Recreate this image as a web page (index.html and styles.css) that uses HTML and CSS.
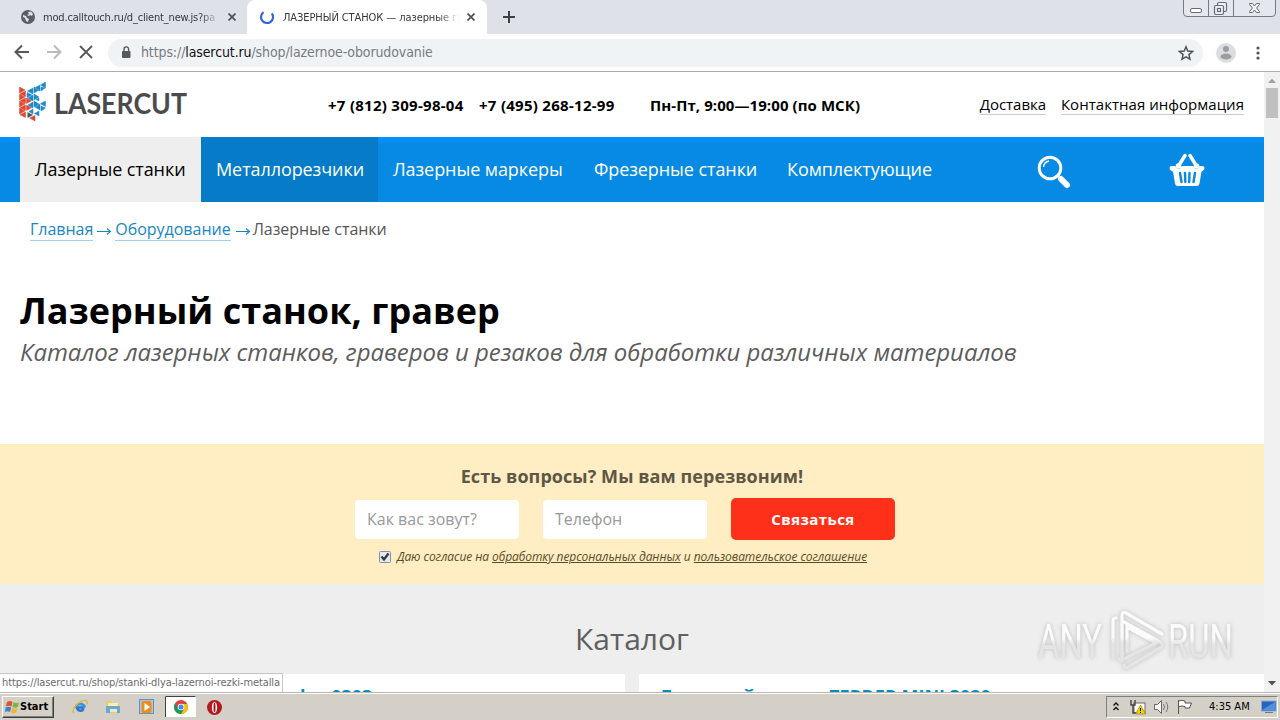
FILE: index.html
```html
<!DOCTYPE html>
<html lang="ru">
<head>
<meta charset="utf-8">
<title>ЛАЗЕРНЫЙ СТАНОК — лазерные граверы</title>
<link rel="stylesheet" href="styles.css">
</head>
<body>
<div class="desktop">
  <div class="tabs">
    <div class="tab tab-idle">
      <svg class="fav" width="14" height="14" viewBox="0 0 14 14"><circle cx="7" cy="7" r="7" fill="#5a5d63"/><path d="M2 5l3 1 1 2 2 1-1 3-2-1-1-3-2-1zM7 2l3-.5L12 4l-1 2-2-1-1 1-2-1 2-1z" fill="#dee1e6"/></svg>
      <span class="tab-text t1">mod.calltouch.ru/d_client_new.js?pa</span>
      <svg width="8" height="8" viewBox="0 0 8 8"><path d="M.5.5l7 7M7.5.5l-7 7" stroke="#4d5056" stroke-width="1.7"/></svg>
    </div>
    <div class="tab tab-active">
      <svg class="fav" width="14" height="14" viewBox="0 0 14 14"><path d="M8.500 1.200A6 6 0 1 0 12.900 8.300" transform="rotate(-50 7 7)" fill="none" stroke="#3367d6" stroke-width="2.200"/></svg>
      <span class="tab-text t2">ЛАЗЕРНЫЙ СТАНОК — лазерные гр</span>
      <svg width="8" height="8" viewBox="0 0 8 8"><path d="M.5.5l7 7M7.5.5l-7 7" stroke="#4d5056" stroke-width="1.7"/></svg>
    </div>
    <svg class="plus" width="12" height="12" viewBox="0 0 12 12"><path d="M6 0v12M0 6h12" stroke="#3c4043" stroke-width="2"/></svg>
    <svg class="winbtns" width="94" height="18" viewBox="0 0 94 18"><path d="M.5 0v13q0 3.500 3.500 3.500h85q3.500 0 3.500-3.500V0M25.500 0v16.500M50.500 0v16.500" fill="#e4e7ee" stroke="#757a86"/><rect x="7.500" y="8.500" width="11" height="4" rx="1.500" fill="#fff" stroke="#666b77"/><g fill="#eef0f4" stroke="#666b77" stroke-width="1.200"><rect x="34.500" y="2.500" width="9" height="9" rx="1.500"/><rect x="31.500" y="5.500" width="9" height="9" rx="1.500"/><rect x="34.500" y="8.500" width="3" height="3"/></g><path d="M66.500 3.500h3l2 2.500 2-2.500h3v1l-3 3.500 3 3.500v1h-3l-2-2.500-2 2.500h-3v-1l3-3.500-3-3.500z" fill="#f6f7fa" stroke="#666b77"/></svg>
  </div>
  <div class="toolbar">
    <svg width="94" height="38" viewBox="0 0 94 38"><path d="M29 18H16M22 11.500L15.500 18l6.500 6.500" fill="none" stroke="#55585d" stroke-width="2"/><path d="M47 18h13M54 11.500l6.500 6.500-6.500 6.500" fill="none" stroke="#b9bbbe" stroke-width="2"/><path d="M80 12l12 12M92 12L80 24" stroke="#55585d" stroke-width="1.800"/></svg>
    <div class="omnibox">
      <svg width="10" height="13" viewBox="0 0 10 13"><rect x="1" y="5" width="8.500" height="7" rx="1" fill="#55585d"/><path d="M3 5V3.200a2.300 2.300 0 0 1 4.600 0V5" fill="none" stroke="#55585d" stroke-width="1.400"/></svg>
      <span class="url"><span>https://</span><b>lasercut.ru</b><span>/shop/lazernoe-oborudovanie</span></span>
      <svg width="16" height="16" viewBox="0 0 16 16"><path d="M8 1.800l1.800 4.300 4.700.4-3.600 3.100 1.100 4.600L8 11.800l-4 2.400 1.100-4.600L1.500 6.500l4.700-.4z" fill="none" stroke="#50555b" stroke-width="1.500"/></svg>
    </div>
    <svg class="profile" width="20" height="20" viewBox="0 0 20 20"><circle cx="10" cy="10" r="10" fill="#dcdddf"/><circle cx="10" cy="6" r="3" fill="#9b9da0"/><ellipse cx="10" cy="13.500" rx="5.500" ry="3" fill="#9b9da0"/></svg>
    <svg class="dots" width="4" height="14" viewBox="0 0 4 14"><g fill="#50545a"><circle cx="2" cy="2" r="1.600"/><circle cx="2" cy="7" r="1.600"/><circle cx="2" cy="12" r="1.600"/></g></svg>
  </div>
  <div class="viewport">
    <main class="page">
      <header class="head">
        <div class="brand">
          <svg class="mark" width="28" height="40" viewBox="0 0 28 40">
            <g fill="#dc4a34" stroke="#dc4a34" stroke-width=".5"><path d="M0.500 5v6l5.500-3zM0.500 12v6l5.500-3zM0.500 19v6l5.500-3zM0.500 26v6l5.500-3zM6.500 9v5.500L1 11.700zM6.500 16v5.500L1 18.700zM6.500 23v5.500L1 25.700zM6.500 30v5.500L1 32.700zM7.500 16v5.500l5-2.800zM7.500 23v5.500l5-2.800zM16 33.500v5.500l-5.500-3z"/></g>
            <g fill="#1e88c9" stroke="#1e88c9" stroke-width=".5"><path d="M14 6v6L8.500 9zM15 5v6l5-3zM21 3v6l-5.500-3zM26.500 0v6L21.500 3zM22 5v4l4-3zM8 10.500v5l5-2.500zM14 13v6L9 16zM15 12v6l5-3zM14 20v6l-5-3zM15 19v6l5-3zM21 22v6l-5-3zM20 16v3l-3-1.500zM26.500 19v5.500l-5-2.800zM22 24v5l4.500-3zM14 27v5l-4-2.500zM20 29v5l-4.500-2.500z"/></g>
            <path d="M8.500 30v6l5.500-3z" fill="#4c5860"/>
          </svg>
          <svg class="wordmark" width="136" height="36" viewBox="0 0 136 36"><text x="0" y="28" textLength="133" lengthAdjust="spacingAndGlyphs">LASERCUT</text></svg>
        </div>
        <b class="ph1">+7 (812) 309-98-04</b><b class="ph2">+7 (495) 268-12-99</b><b class="hours">Пн-Пт, 9:00—19:00 (по МСК)</b>
        <a class="hl hl1">Доставка</a><a class="hl hl2">Контактная информация</a>
      </header>
      <nav class="nav">
        <a class="n1">Лазерные станки</a><a class="n2">Металлорезчики</a><a class="n3">Лазерные маркеры</a><a class="n4">Фрезерные станки</a><a class="n5">Комплектующие</a>
        <svg class="search" width="34" height="34" viewBox="0 0 34 34"><circle cx="13" cy="13" r="10.800" fill="none" stroke="#fff" stroke-width="3"/><path d="M6.500 12a7 7 0 0 1 5.500-6" fill="none" stroke="#fff" stroke-width="1.500"/><path d="M20.500 20.500l3 3" stroke="#fff" stroke-width="2"/><path d="M24 24l6 6" stroke="#fff" stroke-width="6" stroke-linecap="round"/></svg>
        <svg class="basket" width="36" height="34" viewBox="0 0 36 34"><path d="M2.500 13h31q2 0 2 2t-2 3l-1 .5-2 12q-.5 2.500-2.500 2.500H8.500Q6.500 33 6 30.500l-2-12-1.500-.5Q.5 17 .5 15t2-2z" fill="#fff"/><path d="M11 20l1.500 9M16 20l.3 9M20.500 20l-.3 9M26 20l-1.500 9" stroke="#078ae3" stroke-width="2.400" stroke-linecap="round"/><path d="M16 2.500L9.500 13M21 2.500L27.500 13" stroke="#078ae3" stroke-width="5.500" stroke-linecap="round"/><path d="M16 2.500L9.500 13M21 2.500L27.500 13" stroke="#fff" stroke-width="3.500" stroke-linecap="round"/><circle cx="9.500" cy="13" r="2.800" fill="#fff"/><circle cx="27.500" cy="13" r="2.800" fill="#fff"/></svg>
      </nav>
      <div class="crumbs"><a class="c1">Главная</a><svg class="arrow" width="22" height="10" viewBox="0 0 22 10"><path d="M4 5.500h13M14 2.500l3.500 3-3.500 3" fill="none" stroke="#1687c1" stroke-width="1.100"/></svg><a class="c2">Оборудование</a><svg class="arrow" width="22" height="10" viewBox="0 0 22 10"><path d="M5 5.500h13M15 2.500l3.500 3-3.500 3" fill="none" stroke="#1687c1" stroke-width="1.100"/></svg><span class="c3">Лазерные станки</span></div>
      <h1><span>Лазерный станок, гравер</span></h1>
      <p class="lead"><span>Каталог лазерных станков, граверов и резаков для обработки различных материалов</span></p>
      <section class="ask">
        <h2><span>Есть вопросы? Мы вам перезвоним!</span></h2>
        <div class="form"><div class="field"><span class="f1">Как вас зовут?</span></div><div class="field"><span class="f2">Телефон</span></div><div class="send"><span>Связаться</span></div></div>
        <div class="agree"><svg width="12" height="12" viewBox="0 0 12 12"><rect x=".5" y=".5" width="11" height="11" rx="1" fill="#e4e8f2" stroke="#8b8e96"/><path d="M2.500 5.500L5 8.500 9.500 2.500" fill="none" stroke="#2d3748" stroke-width="2.300"/></svg><span class="agree-text">Даю согласие на <u>обработку персональных данных</u> и <u>пользовательское соглашение</u></span></div>
      </section>
      <section class="catalog">
        <h3><span>Каталог</span></h3>
        <div class="cards"><div class="card card-a"><span>lex 0303</span></div><div class="card card-b"><span>Лазерный станок ZERDER MINI 3020</span></div></div>
      </section>
    </main>
    <div class="scroll"><svg width="16" height="14" viewBox="0 0 16 14"><path d="M4 11h8L8 6.500z" fill="#a0a0a0"/></svg><div class="thumb"></div><svg class="down" width="16" height="14" viewBox="0 0 16 14"><path d="M4 3h8L8 7.500z" fill="#505050"/></svg></div>
    <div class="status"><span>https://lasercut.ru/shop/stanki-dlya-lazernoi-rezki-metalla</span></div>
    <svg class="mark-run" width="200" height="66" viewBox="0 0 200 66">
      <defs><linearGradient id="g" x1="0" y1="0" x2="0" y2="1"><stop offset=".45" stop-color="#fbfbfb"/><stop offset=".55" stop-color="#e5e5e5"/></linearGradient></defs>
      <g class="glow"><text x="2" y="51" textLength="64" lengthAdjust="spacingAndGlyphs">ANY</text><text x="132" y="51" textLength="65" lengthAdjust="spacingAndGlyphs">RUN</text>
      <path d="M77 51V14q0-3 3-3M86 54V9q0-5 4-3l36 21M88 15l36 20q5 3 0 6L92 60q-4 2-4-2M83 52q2 2 5 0l32-16L91 20v24" fill="none" stroke="url(#g)" stroke-width="3.200" stroke-linecap="round"/></g>
    </svg>
  </div>
  <footer class="taskbar">
    <div class="start"><svg width="15" height="14" viewBox="0 0 15 14"><path d="M2 2q3-2 5.500 0L6.500 6.500Q4 5 .8 6.500z" fill="#e4502e"/><path d="M8.300 2.300q3 1.500 5.700 0L12.800 7q-2.500 1.300-5.300 0z" fill="#7cb83d"/><path d="M.6 7.500Q3.500 6 6.200 7.600L5 12Q2.500 10.500 0 12z" fill="#3f7fd0"/><path d="M7.200 8q2.500 1.500 5.300 0l-1.200 4.500q-2.500 1.300-5.200 0z" fill="#f2b52c"/></svg><b>Start</b></div>
    <svg class="quick" width="154" height="24" viewBox="0 0 154 24">
      <g transform="translate(1 4)"><path d="M12.500 8.500H5a3.500 3.500 0 0 0 6.500 1.500" fill="none" stroke="#2476cf" stroke-width="2.500"/><path d="M3.500 9a4.800 4.800 0 0 1 9.400-.5" fill="none" stroke="#3193e5" stroke-width="2.500"/><path d="M2 14Q-1 11 5 5.500T15 2q1 1-.5 3.500" fill="none" stroke="#e3b338" stroke-width="1.300"/></g>
      <g transform="translate(34 4)"><path d="M1 2h5l1 2h7v10H1z" fill="#eacb65"/><path d="M3 4h10v7H3z" fill="#f9efb8"/><path d="M1 7h14v7h-3v-4H5v4H1z" fill="#6ba9cb"/><path d="M5 10h7v3H5z" fill="#e8e8d8"/></g>
      <g transform="translate(68 4)"><rect x=".5" y=".5" width="14" height="14" fill="#a6c8e4" stroke="#5f91c2"/><rect x="2.500" y="2" width="10" height="12" rx="2" fill="#f28a16"/><path d="M5.500 4v8l5.500-4z" fill="#fff"/></g>
      <path d="M94 1h31v21H94z" fill="#fff"/><path d="M94.500 22V1.500h30" fill="none" stroke="#404040"/>
      <g transform="translate(110 12)"><circle r="7" fill="#db4437"/><path d="M-6 -3.500A7 7 0 0 0 0 7L3 1.800H-3z" fill="#0f9d58"/><path d="M0 7A7 7 0 0 0 6.300-3H0L3 2z" fill="#f4c20d"/><circle r="3.300" fill="#fff"/><circle r="2.500" fill="#4285f4"/></g>
      <g transform="translate(143.500 12.500)"><circle r="7.500" fill="#b51820"/><ellipse rx="2.600" ry="5.600" fill="#fff"/><ellipse rx="1" ry="4.800" fill="#a71218"/></g>
    </svg>
    <div class="tray"><svg width="86" height="20" viewBox="0 0 86 20"><path d="M6.500 8.500L9 6l2.500 2.500M6.500 13L9 10.500l2.500 2.500" fill="none" stroke="#111" stroke-width="1.400"/><g><rect x="27" y="6" width="11" height="10" fill="#fff" stroke="#666"/><path d="M24 3v5h4V3M26 8v8h4" fill="none" stroke="#444" stroke-width="1.400"/><path d="M33.500 8l5 9h-10z" fill="#f5d400" stroke="#9b7b00" stroke-width=".7"/><path d="M33.500 11v3M33.500 15v1" stroke="#000"/></g><path d="M47.500 7.500h3l4-4v13l-4-4h-3z" fill="#f7f7f7" stroke="#666"/><path d="M56.500 7q2 3 0 6M59 5q3.500 5 0 10" fill="none" stroke="#777"/><path d="M71.500 3v14M72 4q3-1.500 6 0v2h6.500l-2 5H78V9.500q-3-1-6 0" fill="#fff" stroke="#555"/></svg><span class="clock">4:35 AM</span><svg class="screen" width="16" height="14" viewBox="0 0 16 14"><rect x=".5" y="1" width="14.500" height="10" fill="#2864bd" stroke="#8ba9cf"/><path d="M1 10L14 2v8z" fill="#4f91df"/><path d="M4 12.500h8" stroke="#777"/></svg></div>
  </footer>
</div>
</body>
</html>
```
FILE: styles.css
```css
*{box-sizing:border-box}
body{margin:0;font-family:"Open Sans","Noto Sans",sans-serif;color:#000}
svg{display:block;flex:none}
.desktop{width:1280px;height:720px;overflow:hidden;display:flex;flex-direction:column;background:#fff}
span,b,a{white-space:nowrap}
.tabs{height:34px;background:#dee1e8;display:flex;align-items:center;flex:none;position:relative;font:11px "DejaVu Sans Condensed","DejaVu Sans",sans-serif}
.tab{height:34px;display:flex;align-items:center}
.tab-idle{width:247px;padding-left:21px}
.tab-active{width:240px;background:#fff;border-radius:8px 8px 0 0;padding-left:13px}
.tab-text{overflow:hidden;color:#34373b;-webkit-mask-image:linear-gradient(90deg,#000 88%,transparent)}
.t1{width:177px;margin:0 8px;letter-spacing:-.18px}
.t2{width:176px;margin:0 8px 0 9px;letter-spacing:-.08px}
.plus{margin-left:16px}
.winbtns{position:absolute;right:3px;top:0}
.toolbar{height:38px;flex:none;display:flex;align-items:center;border-bottom:1px solid #adadad}
.omnibox{width:1095px;height:28px;border-radius:14px;background:#f0f3f6;margin-left:14px;display:flex;align-items:center;padding:0 9px 0 13px}
.url{flex:1;margin:-2px 0 0 10px;font:14px "DejaVu Sans Condensed","DejaVu Sans",sans-serif;letter-spacing:-.11px;color:#777b80}
.url b{font-weight:400;color:#111}
.profile{margin-left:13px}
.dots{margin-left:20px}
.viewport{height:620px;flex:none;display:flex;position:relative;overflow:hidden}
.page{width:1264px;height:620px;overflow:hidden}
.head{height:65px;display:flex;align-items:center;font-size:15px;padding:1px 20px 0 19px}
.brand{display:flex;align-items:center;width:309px;margin-top:-7px}
.wordmark{margin:4px 0 0 7px}
.wordmark text{font:700 28px Lato,sans-serif;fill:#4b4b4d}
.ph1{width:151px;letter-spacing:.28px}
.ph2{width:171px;letter-spacing:.28px}
.hours{flex:1;letter-spacing:.08px}
.hl{border-bottom:1px solid #ccc;line-height:19px}
.hl1{margin-right:15px;letter-spacing:-.05px}
.hl2{letter-spacing:.03px}
.nav{height:65px;background:#078ae3;border-top:5px solid #008ef8;display:flex;align-items:stretch;font-size:18px;letter-spacing:-.08px;color:#fff;padding-left:20px}
.nav a{display:block;padding:5px 15px 0;line-height:55px;height:65px;margin-top:-5px}
.nav .n1{background:#eee;color:#000;width:181px}
.nav .n2{background:#067cc8;width:177px}
.n3{width:201px}
.n4{width:193px}
.n5{width:173px}
.search{margin:13px 0 0 92px}
.basket{margin:11px 0 0 98px}
.crumbs{height:55px;display:flex;align-items:center;padding-left:30px;font-size:16px;letter-spacing:-.02px;color:#555}
.crumbs a{color:#1687c1;border-bottom:1px solid #9dd0f1;line-height:21px}
.arrow{margin-top:2px}
.c3{margin-top:-1px;letter-spacing:-.06px}
h1{margin:29px 0 0 20px;font-size:36px;line-height:50px;height:50px;letter-spacing:.04px}
.lead{margin:0 0 0 20px;font-size:24px;font-style:italic;line-height:32px;height:32px;letter-spacing:-.05px;color:#5c5c5c}
.ask{margin-top:76px;height:140px;background:#ffedc3;display:flex;flex-direction:column;align-items:center}
h2{margin:20px 0 0;font-size:18px;line-height:25px;letter-spacing:.06px;color:#5e5746}
.form{display:flex;gap:24px;align-items:center;margin-top:8px;margin-right:14px}
.field{width:164px;height:39px;background:#fff;border-radius:4px;padding-left:12px;line-height:38px;font-size:16px;color:#999}
.send{width:164px;height:42px;border-radius:5px;background:#ff3019;color:#fff;font-weight:700;font-size:15px;letter-spacing:.45px;text-align:center;line-height:42px}
.form{padding-top:1px}
.agree{display:flex;align-items:center;gap:6px;margin-top:9px;margin-right:18px;font-size:12px;line-height:16px;letter-spacing:-.07px;font-style:italic;color:#5b4c28}
.catalog{background:#eee;height:108px}
h3{margin:0;padding-top:34px;font-weight:400;font-size:30px;line-height:41px;height:90px;text-align:center;color:#606060}
.cards{display:flex;gap:14px}
.card{height:60px;background:#fff;width:625px;font-size:18px;font-weight:700;line-height:24px;color:#078bb9;padding:10px 20px}
.card-a{padding-left:300px}
.scroll{width:16px;background:#f1f1f1;display:flex;flex-direction:column}
.thumb{width:12px;height:30px;margin:2px 2px 0;background:#c0c0c0}
.down{margin-top:auto}
.status{position:absolute;left:0;bottom:0;width:283px;height:19px;background:#fff;border:1px solid #c6c6c6;border-left:0;border-bottom:0;font:11px/18px "DejaVu Sans Condensed","DejaVu Sans",sans-serif;letter-spacing:-.1px;color:#6b6b6b;padding-left:2px}
.mark-run{position:absolute;left:1036px;top:535px}
.mark-run text{font:400 49px "Roboto",sans-serif;fill:url(#g)}
.glow{filter:drop-shadow(0 0 2px #bbb)}
.taskbar{height:28px;background:#d4d0c8;border-top:1px solid #b7b5af;box-shadow:inset 0 1px #fff;display:flex;align-items:center;font:11px "DejaVu Sans Condensed","DejaVu Sans",sans-serif}
.start{width:52px;height:22px;margin-left:2px;border:1px solid #fff;border-right-color:#404040;border-bottom-color:#404040;box-shadow:inset -1px -1px #808080;display:flex;align-items:center;padding-left:2px}
.quick{margin-left:17px}
.tray{margin-left:auto;margin-right:2px;width:172px;height:22px;border:1px solid #808080;border-right-color:#fff;border-bottom-color:#fff;display:flex;align-items:center}
.clock{margin-left:16px;flex:1}
```
